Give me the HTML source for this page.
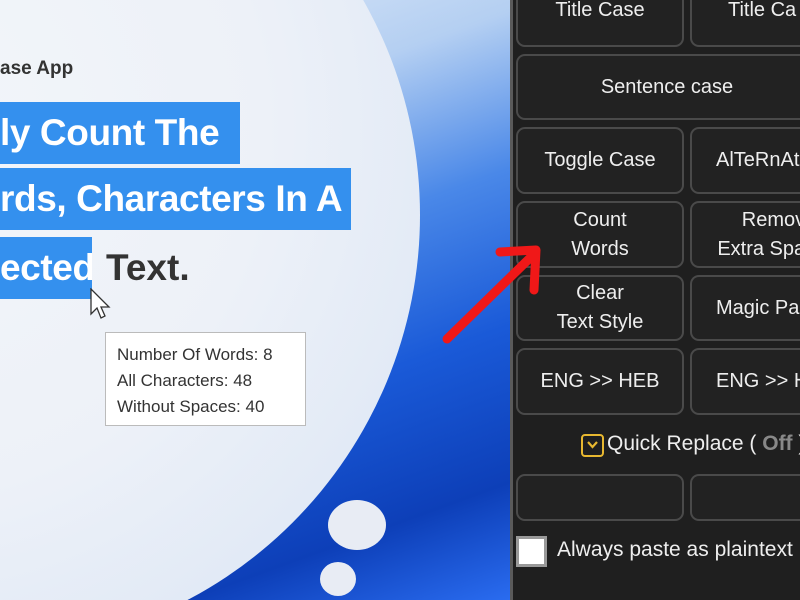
<!DOCTYPE html>
<html><head><meta charset="utf-8"><style>
*{margin:0;padding:0;box-sizing:border-box}
html,body{width:800px;height:600px;overflow:hidden}
body{position:relative;background:#1f1f1f;font-family:"Liberation Sans","DejaVu Sans",sans-serif}
#wall{position:absolute;left:0;top:0;width:512px;height:600px;overflow:hidden;
background:linear-gradient(160deg,#e6eef8 0%,#b4cff2 25%,#4a88e8 45%,#1a5ad8 65%,#0d3fb8 85%,#2a6cf0 100%)}
#circle{position:absolute;left:-450px;top:-220px;width:870px;height:870px;border-radius:50%;
background:radial-gradient(circle at 40% 40%,#f3f6fa 0%,#edf1f8 50%,#e2eaf6 75%,#d4e1f4 100%)}
.hl{position:absolute;left:0;background:#3490ee;color:#fff;font-weight:bold;font-size:37px;letter-spacing:-0.4px;line-height:62px;white-space:nowrap;overflow:hidden}
#tip{position:absolute;left:105px;top:332px;width:201px;height:94px;background:#fff;border:1px solid #bbb;padding:9px 11px;font-size:17px;line-height:26px;color:#333}
.btn{position:absolute;border:2px solid #4a4a4a;border-radius:9px;background:#222;color:#eee;font-size:20px;text-align:center;display:flex;align-items:center;justify-content:center;line-height:29px;white-space:nowrap;overflow:hidden}
.bl{left:516px;width:168px}.br{left:690px;width:110px;border-right:none;border-radius:9px 0 0 9px;justify-content:flex-start;padding-left:24px}
.dot{position:absolute;border-radius:50%;background:#e8ecf4}
</style></head><body>
<div id="wall"><div id="circle"></div>
<div class="dot" style="left:328px;top:500px;width:58px;height:50px"></div>
<div class="dot" style="left:320px;top:562px;width:36px;height:34px"></div>
</div>
<div style="position:absolute;left:510px;top:0;width:3px;height:600px;background:#5a5a5a"></div>
<div style="position:absolute;left:0;top:58px;font-size:19px;font-weight:bold;color:#333">ase App</div>
<div class="hl" style="top:102px;width:240px">ly Count The</div>
<div class="hl" style="top:168px;width:351px">rds, Characters In A</div>
<div class="hl" style="top:237px;width:92px">ected</div>
<div style="position:absolute;left:106px;top:237px;font-size:37px;font-weight:bold;line-height:62px;color:#333">Text.</div>
<svg style="position:absolute;left:90px;top:288px" width="22" height="34" viewBox="0 0 22 34"><path d="M1 1 L1 26 L7 20 L11 30 L15 28 L11 19 L19 19 Z" fill="#fff" stroke="#333" stroke-width="1.3"/></svg>
<div id="tip">Number Of Words: 8<br>All Characters: 48<br>Without Spaces: 40</div>
<div class="btn bl" style="top:-20px;height:67px;align-items:flex-end;padding-bottom:20px">Title Case</div>
<div class="btn br" style="top:-20px;height:67px;align-items:flex-end;padding-bottom:20px;padding-left:36px">Title Ca</div>
<div class="btn" style="left:516px;width:284px;top:54px;height:66px;border-right:none;border-radius:9px 0 0 9px;padding-left:16px">Sentence case</div>
<div class="btn bl" style="top:127px;height:67px">Toggle Case</div>
<div class="btn br" style="top:127px;height:67px">AlTeRnAt</div>
<div class="btn bl" style="top:201px;height:67px">Count<br>Words</div>
<div class="btn br" style="top:201px;height:67px;text-align:right;padding-left:22px">&nbsp;&nbsp;&nbsp;&nbsp;&nbsp;Remov<br>Extra Spa</div>
<div class="btn bl" style="top:275px;height:66px">Clear<br>Text Style</div>
<div class="btn br" style="top:275px;height:66px">Magic Pa</div>
<div class="btn bl" style="top:348px;height:67px">ENG &gt;&gt; HEB</div>
<div class="btn br" style="top:348px;height:67px">ENG &gt;&gt; H</div>
<div style="position:absolute;left:581px;top:434px;width:23px;height:23px;border:2.5px solid #e8b830;border-radius:4px"></div>
<svg style="position:absolute;left:585px;top:440px" width="15" height="10"><path d="M3 2 L7.5 7 L12 2" fill="none" stroke="#e8b830" stroke-width="2.2"/></svg>
<div style="position:absolute;left:607px;top:432px;font-size:21px;color:#eee;white-space:nowrap">Quick Replace ( <span style="color:#888;font-weight:bold">Off</span> )</div>
<div class="btn bl" style="top:474px;height:47px"></div>
<div class="btn br" style="top:474px;height:47px"></div>
<div style="position:absolute;left:516px;top:536px;width:31px;height:31px;background:#fff;border:3px solid #999"></div>
<div style="position:absolute;left:557px;top:538px;font-size:21px;color:#eee;white-space:nowrap">Always paste as plaintext</div>
<svg style="position:absolute;left:0;top:0" width="800" height="600"><path d="M447 339 L532 256" stroke="#f01818" stroke-width="9" stroke-linecap="round"/><path d="M500 252 L536 250 L534 290" fill="none" stroke="#f01818" stroke-width="9" stroke-linecap="round" stroke-linejoin="round"/></svg>
</body></html>
